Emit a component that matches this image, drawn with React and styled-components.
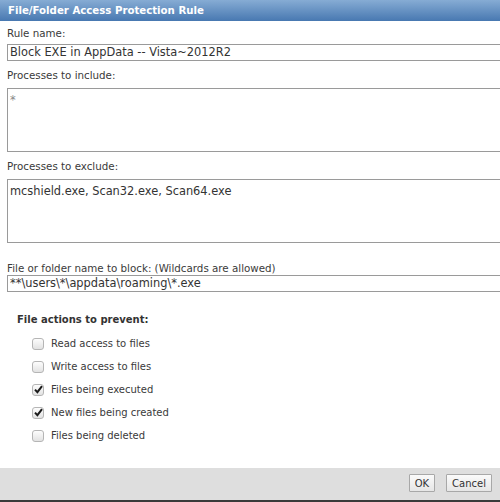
import React from "react";
import styled, { createGlobalStyle } from "styled-components";

const Global = createGlobalStyle`
  html, body { margin: 0; padding: 0; background: #fff; overflow: hidden; }
  body { font-family: "DejaVu Sans", Verdana, sans-serif; }
  * { box-sizing: border-box; }
`;

const Dialog = styled.div`
  width: 500px;
  height: 502px;
  display: flex;
  flex-direction: column;
  background: #fff;
  overflow: hidden;
`;

const Header = styled.div`
  height: 21px;
  line-height: 21px;
  padding-left: 8px;
  color: #fff;
  font-weight: bold;
  font-size: 10.2px;
  background: linear-gradient(#86acd4, #4878b1);
`;

const Body = styled.div`
  flex: 1;
  padding-left: 7px;
`;

const Label = styled.div`
  height: 14px;
  line-height: 14px;
  font-size: 10.3px;
  color: #3a3a3a;
  margin-top: ${(p) => p.$top}px;
  margin-bottom: ${(p) => p.$bottom}px;
`;

const TextInput = styled.div`
  height: 17px;
  width: 510px;
  border: 1px solid #9a9a9a;
  font-size: 11.4px;
  line-height: 15px;
  padding-left: 2px;
  color: #333;
  white-space: nowrap;
`;

const TextArea = styled.div`
  height: 64px;
  width: 510px;
  border: 1px solid #9a9a9a;
  font-size: 11.4px;
  line-height: 15px;
  padding: 4px 2px;
  color: ${(p) => (p.$muted ? "#888" : "#333")};
`;

const Section = styled.div`
  padding-left: 10px;
`;

const SectionTitle = styled.div`
  height: 14px;
  line-height: 14px;
  font-size: 10px;
  font-weight: bold;
  color: #333;
  margin-top: 21px;
  margin-bottom: 5px;
`;

const Row = styled.label`
  display: flex;
  align-items: center;
  height: 23px;
  padding-left: 15px;
  font-size: 10px;
  color: #3a3a3a;
  gap: 7px;
`;

const Box = styled.span`
  width: 12px;
  height: 12px;
  border: 1px solid #b5b5b5;
  border-radius: 3px;
  background: linear-gradient(#fdfdfd, #e2e2e2);
  display: flex;
  align-items: center;
  justify-content: center;
`;

const Footer = styled.div`
  height: 34px;
  background: #dedede;
  border-bottom: 2px solid #3a3a3a;
  display: flex;
  justify-content: flex-end;
  align-items: center;
  gap: 11px;
  padding-right: 8px;
  padding-bottom: 2px;
`;

const Button = styled.button`
  height: 18px;
  padding: 0 5px;
  font-family: "DejaVu Sans", Verdana, sans-serif;
  font-size: 10px;
  color: #333;
  border: 1px solid #a8a8a8;
  background: linear-gradient(#fafafa, #e6e6e6);
  border-radius: 1px;
`;

const Check = () => (
  <svg width="9" height="9" viewBox="0 0 9 9">
    <path d="M1 4.6 L3.4 7.2 L8 1.2" fill="none" stroke="#1a1a1a" strokeWidth="2" />
  </svg>
);

const actions = [
  { label: "Read access to files", checked: false },
  { label: "Write access to files", checked: false },
  { label: "Files being executed", checked: true },
  { label: "New files being created", checked: true },
  { label: "Files being deleted", checked: false },
];

export default function App() {
  return (
    <Dialog>
      <Global />
      <Header>File/Folder Access Protection Rule</Header>
      <Body>
        <Label $top={5} $bottom={4}>Rule name:</Label>
        <TextInput>Block EXE in AppData -- Vista~2012R2</TextInput>
        <Label $top={7} $bottom={6}>Processes to include:</Label>
        <TextArea $muted>*</TextArea>
        <Label $top={7} $bottom={6}>Processes to exclude:</Label>
        <TextArea>mcshield.exe, Scan32.exe, Scan64.exe</TextArea>
        <Label $top={18} $bottom={0}>File or folder name to block: (Wildcards are allowed)</Label>
        <TextInput>**\users\*\appdata\roaming\*.exe</TextInput>
        <Section>
          <SectionTitle>File actions to prevent:</SectionTitle>
          {actions.map((a) => (
            <Row key={a.label}>
              <Box>{a.checked && <Check />}</Box>
              {a.label}
            </Row>
          ))}
        </Section>
      </Body>
      <Footer>
        <Button>OK</Button>
        <Button>Cancel</Button>
      </Footer>
    </Dialog>
  );
}
